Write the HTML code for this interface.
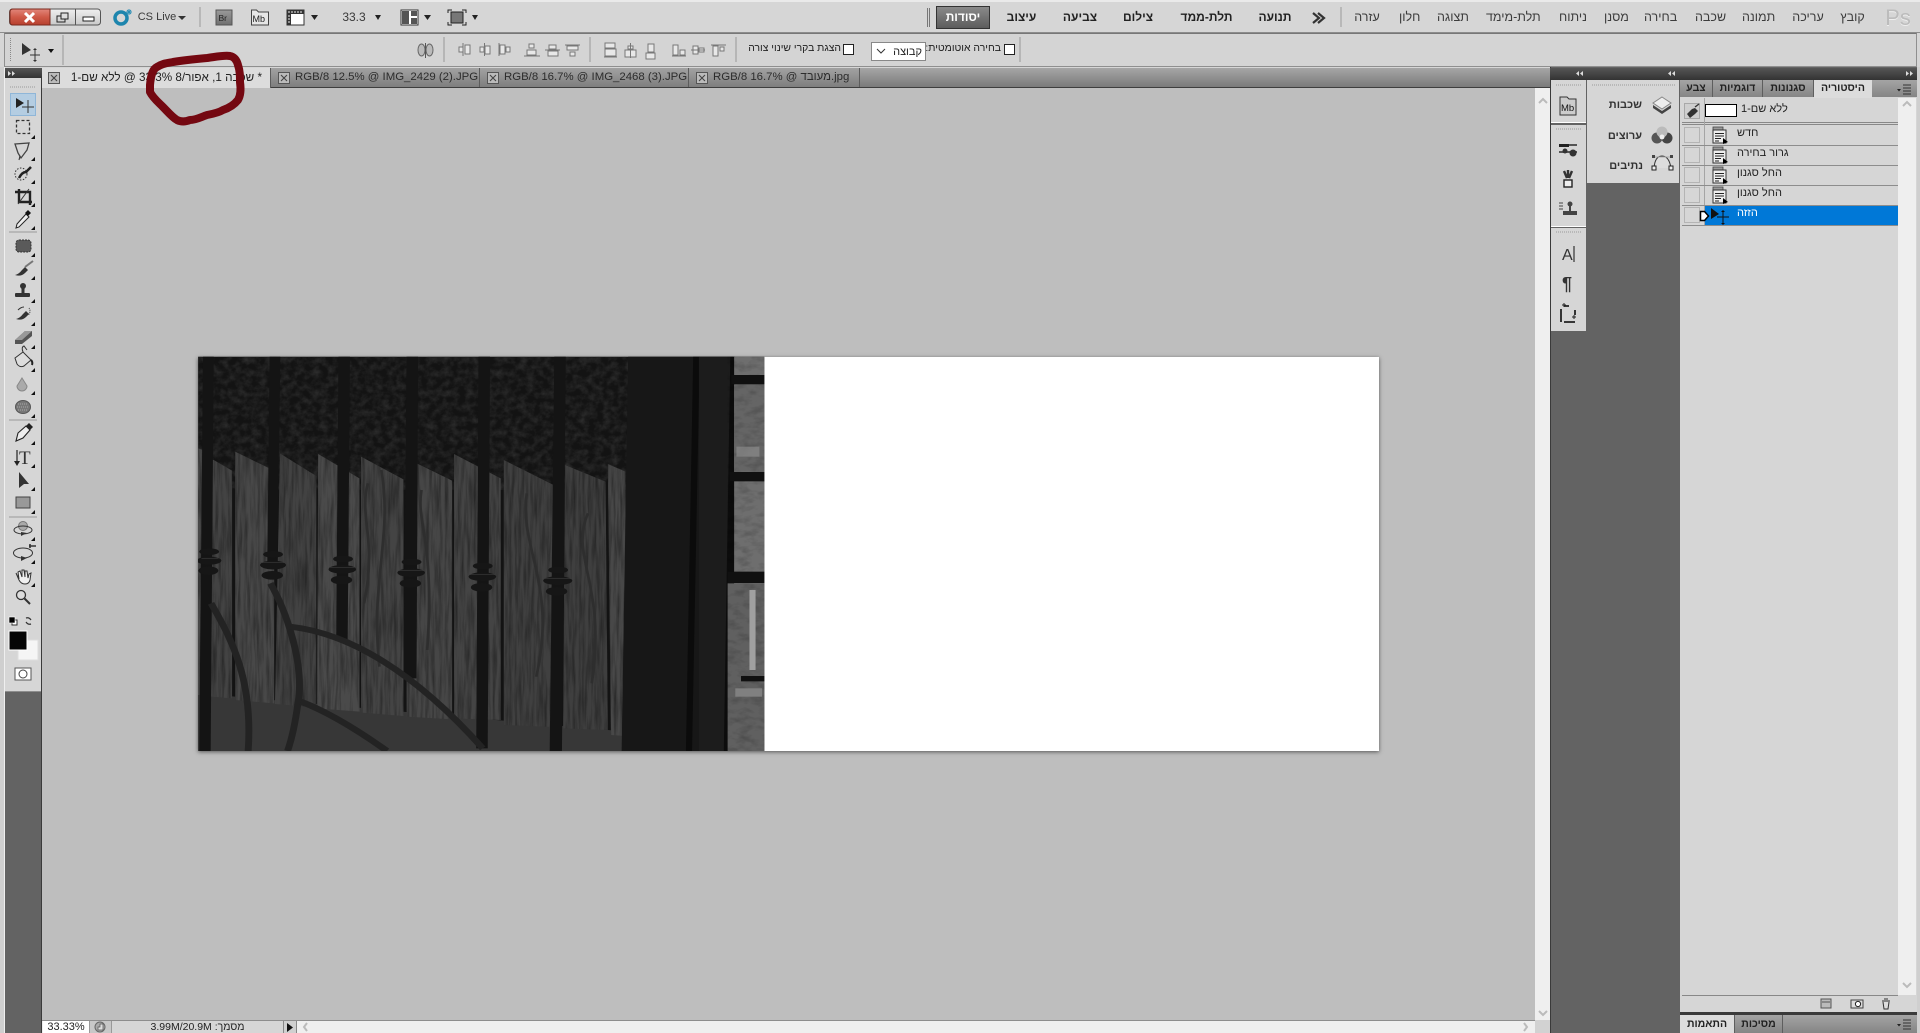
<!DOCTYPE html>
<html lang="he">
<head>
<meta charset="utf-8">
<title>Photoshop CS5</title>
<style>
html,body{margin:0;padding:0;width:1920px;height:1033px;overflow:hidden;background:#d6d6d6;}
body{position:relative;font-family:"Liberation Sans","Noto Sans CJK SC",sans-serif;font-size:12px;color:#333;}
.a{position:absolute;box-sizing:border-box;}
.t{position:absolute;white-space:nowrap;text-align:center;line-height:16px;height:16px;}
.m{font-size:12.5px;color:#3c3c3c;top:9px;}
.w{font-size:12px;font-weight:bold;color:#222;top:9px;}
.tab{position:absolute;top:68px;height:19px;box-sizing:border-box;background:linear-gradient(#a2a2a2,#7e7e7e);border-right:1px solid #5c5c5c;color:#2c2c2c;line-height:19px;font-size:11.4px;white-space:nowrap;}
.ptab{position:absolute;box-sizing:border-box;background:linear-gradient(#a4a4a4,#858585);border-right:1px solid #5e5e5e;text-align:center;font-size:10.5px;color:#222;font-weight:bold;white-space:nowrap;}
.row{position:absolute;left:1682px;width:216px;height:20px;border-bottom:1px solid #8d8d8d;box-sizing:border-box;}
.hb{position:absolute;left:1684px;width:16px;height:16px;border:1px solid #b4b4b4;box-sizing:border-box;}
.ht{position:absolute;left:1737px;font-size:11px;line-height:14px;white-space:nowrap;color:#222;}
.lb{position:absolute;left:1600px;width:42px;text-align:right;font-size:11px;font-weight:bold;color:#333;line-height:16px;white-space:nowrap;}
</style>
</head>
<body>
<!-- frames -->
<div class="a" style="left:0;top:0;width:1920px;height:2px;background:#eaeaea"></div>
<div class="a" style="left:0;top:32px;width:1920px;height:1px;background:#8c8c8c"></div>
<div class="a" style="left:4px;top:33px;width:1913px;height:34px;border:1px solid #8f8f8f;border-top:1px solid #777;background:#d4d4d4"></div>
<!-- doc area -->
<div class="a" style="left:42px;top:88px;width:1493px;height:932px;background:#bebebe"></div>
<!-- doc tab strip -->
<div class="a" style="left:42px;top:68px;width:1508px;height:19px;background:linear-gradient(#a6a6a6,#7a7a7a)"></div>
<div class="a" style="left:42px;top:87px;width:1508px;height:1px;background:#3e3e3e"></div>
<div class="tab" style="left:42px;width:229px;background:#dcdcdc;color:#222;height:20px;font-size:11.7px"><span dir="rtl" style="position:absolute;left:24px;width:196px;text-align:right;unicode-bidi:isolate">* שכבה 1, אפור/8 33.3% @ ללא שם-1</span></div>
<div class="tab" style="left:271px;width:209px"><span style="position:absolute;left:24px">RGB/8 12.5% @ IMG_2429 (2).JPG</span></div>
<div class="tab" style="left:480px;width:209px"><span style="position:absolute;left:24px">RGB/8 16.7% @ IMG_2468 (3).JPG</span></div>
<div class="tab" style="left:689px;width:171px"><span style="position:absolute;left:24px">RGB/8 16.7% @ מעובד.jpg</span></div>

<!-- left column -->
<div class="a" style="left:0;top:67px;width:5px;height:966px;background:#cfcfcf;border-right:1px solid #efefef"></div>
<div class="a" style="left:5px;top:68px;width:37px;height:965px;background:#636363;border-right:1px solid #3a3a3a"></div>
<div class="a" style="left:5px;top:68px;width:37px;height:10px;background:linear-gradient(#555,#333)"></div>
<div class="a" style="left:5px;top:78px;width:36px;height:614px;background:#d6d6d6;border-bottom:1px solid #8d8d8d"></div>
<div class="a" style="left:10px;top:93px;width:26px;height:23px;background:#b4cde2;border:1px solid #8fb6d8"></div>

<!-- canvas -->
<div class="a" style="left:198px;top:357px;width:1181px;height:394px;background:#fff;box-shadow:0 1px 4px rgba(0,0,0,.55)"></div>
<svg class="a" style="left:190px;top:350px" width="600" height="410" viewBox="0 0 1568 1230" preserveAspectRatio="none">
<defs>
<filter id="tr" x="0" y="0" width="100%" height="100%" color-interpolation-filters="sRGB"><feTurbulence type="fractalNoise" baseFrequency=".05" numOctaves="4" seed="2"/><feColorMatrix values="0 0 0 0 .22  0 0 0 0 .22  0 0 0 0 .22  1.2 0 0 0 -.42"/></filter>
<filter id="wood" x="0" y="0" width="100%" height="100%" color-interpolation-filters="sRGB"><feTurbulence type="fractalNoise" baseFrequency=".12 .008" numOctaves="3" seed="9"/><feColorMatrix values="0 0 0 0 0  0 0 0 0 0  0 0 0 0 0  .8 0 0 0 -.3"/><feComposite in2="SourceAlpha" operator="in" result="k"/><feMerge><feMergeNode in="SourceGraphic"/><feMergeNode in="k"/></feMerge></filter>
<filter id="sn" x="0" y="0" width="100%" height="100%" color-interpolation-filters="sRGB"><feTurbulence type="fractalNoise" baseFrequency=".03 .05" numOctaves="3" seed="5"/><feColorMatrix values="0 0 0 0 0  0 0 0 0 0  0 0 0 0 0  1 0 0 0 -.42"/></filter>
<clipPath id="ph"><rect x="21" y="20" width="1480" height="1183"/></clipPath>
</defs>
<g clip-path="url(#ph)">
<rect x="21" y="20" width="1480" height="1183" fill="#131313"/>
<rect x="21" y="20" width="1130" height="400" filter="url(#tr)"/>
<!-- ground -->
<polygon points="21,1030 1140,1145 1140,1203 21,1203" fill="#373737"/>
<!-- planks -->
<g filter="url(#wood)">
<polygon points="21,295 35,300 35,1035 21,1035" fill="#4a4a4a"/>
<polygon points="35,312 110,362 110,1045 35,1038" fill="#434343"/>
<polygon points="118,305 220,362 220,1060 118,1050" fill="#484848"/>
<polygon points="235,310 330,378 330,1072 222,1062" fill="#424242"/>
<polygon points="335,312 443,385 443,1085 332,1075" fill="#4a4a4a"/>
<polygon points="447,320 558,388 558,1098 447,1088" fill="#444444"/>
<polygon points="566,325 685,392 685,1108 566,1100" fill="#464646"/>
<polygon points="690,312 812,385 812,1110 690,1105" fill="#444444"/>
<polygon points="820,330 945,402 972,415 972,1132 820,1125" fill="#404040"/>
<polygon points="980,345 1086,395 1092,1140 975,1135" fill="#3f3f3f"/>
<polygon points="1092,342 1138,365 1138,1158 1100,1155" fill="#484848"/>
</g>
<path d="M465 400C440 500 490 560 455 760 M500 360C530 560 470 700 495 950 M605 420C590 520 640 560 620 900 M880 430C860 600 960 700 905 980 M1040 490C990 620 1090 700 1050 1000" stroke="#2e2e2e" stroke-width="7" fill="none"/>
<!-- post -->
<polygon points="1145,20 1420,20 1420,1203 1128,1203" fill="#171717"/>
<polygon points="1315,20 1332,20 1312,1203 1296,1203" fill="#0b0b0b"/>
<rect x="1330" y="20" width="82" height="1183" fill="#1c1c1c"/>
<polygon points="1412,20 1424,20 1420,1203 1395,1203" fill="#0c0c0c"/>
<!-- stone -->
<rect x="1422" y="20" width="80" height="1183" fill="#6e6e6e"/>
<rect x="1405" y="700" width="97" height="503" fill="#606060"/>
<rect x="1422" y="105" width="80" height="260" fill="#656565"/>
<rect x="1405" y="20" width="97" height="1183" filter="url(#sn)" opacity=".4"/>
<g fill="#101010"><rect x="1415" y="75" width="87" height="28"/><rect x="1410" y="366" width="92" height="28"/><rect x="1405" y="665" width="97" height="34"/><rect x="1440" y="978" width="62" height="16"/></g>
<rect x="1462" y="720" width="16" height="240" fill="#a0a0a0"/>
<rect x="1428" y="290" width="60" height="30" fill="#8a8a8a" opacity=".7"/>
<rect x="1425" y="1015" width="70" height="25" fill="#808080"/>
<!-- bars -->
<g fill="#141414">
<polygon points="34,20 62,20 54,1203 24,1203"/>
<polygon points="208,20 236,20 228,640 202,640"/>
<polygon points="388,20 418,20 412,870 382,870"/>
<polygon points="566,20 596,20 592,985 558,985"/>
<polygon points="754,20 784,20 778,1195 748,1195"/>
<polygon points="952,20 982,20 972,1203 940,1203"/>
</g>
<!-- curves -->
<g fill="none" stroke="#232323" stroke-width="18">
<path d="M55 760C110 870 165 990 152 1203"/>
<path d="M210 700C255 790 300 950 282 1060C275 1120 265 1170 255 1203"/>
<path d="M262 830C420 850 590 970 765 1195"/>
<path d="M290 1055C370 1090 450 1150 515 1203"/>
</g>
<!-- finials -->
<g fill="#161616">
<g><ellipse cx="50" cy="605" rx="26" ry="10"/><ellipse cx="50" cy="632" rx="32" ry="12"/><ellipse cx="48" cy="662" rx="26" ry="13"/></g>
<g><ellipse cx="217" cy="613" rx="26" ry="10"/><ellipse cx="217" cy="645" rx="34" ry="13"/><ellipse cx="215" cy="676" rx="28" ry="13"/></g>
<g><ellipse cx="400" cy="627" rx="26" ry="10"/><ellipse cx="398" cy="658" rx="36" ry="13"/><ellipse cx="396" cy="690" rx="28" ry="13"/></g>
<g><ellipse cx="579" cy="636" rx="26" ry="10"/><ellipse cx="578" cy="668" rx="36" ry="13"/><ellipse cx="576" cy="700" rx="28" ry="13"/></g>
<g><ellipse cx="765" cy="648" rx="26" ry="10"/><ellipse cx="764" cy="680" rx="36" ry="13"/><ellipse cx="762" cy="712" rx="28" ry="13"/></g>
<g><ellipse cx="962" cy="660" rx="26" ry="10"/><ellipse cx="961" cy="692" rx="38" ry="13"/><ellipse cx="958" cy="724" rx="28" ry="13"/></g>
</g>
<g stroke="#3a3a3a" stroke-width="2" fill="none"><path d="M30 625H74M185 638H250M365 652H432M545 662H614M730 674H800M928 686H998"/></g>
</g>
</svg>

<!-- doc scrollbars -->
<div class="a" style="left:1535px;top:88px;width:15px;height:932px;background:#efefef"></div>
<div class="a" style="left:42px;top:1020px;width:1508px;height:13px;background:#efefef;border-top:1px solid #8d8d8d"></div>
<div class="a" style="left:1535px;top:1020px;width:15px;height:13px;background:#d2d2d2"></div>
<div class="a" style="left:43px;top:1021px;width:46px;height:12px;background:#fff;text-align:center;font-size:11px;line-height:12px;color:#222">33.33%</div>
<div class="a" style="left:89px;top:1021px;width:23px;height:12px;background:#c8c8c8;border-left:1px solid #999;border-right:1px solid #999"></div>
<div class="a" style="left:112px;top:1021px;width:171px;height:12px;background:#d6d6d6;text-align:center;font-size:10.5px;line-height:12px;color:#222" dir="rtl">מסמך: 3.99M/20.9M</div>
<div class="a" style="left:283px;top:1021px;width:14px;height:12px;background:#d0d0d0;border-left:1px solid #888;border-right:1px solid #888"></div>

<!-- right dock -->
<div class="a" style="left:1550px;top:67px;width:370px;height:966px;background:#636363;border-left:1px solid #3a3a3a"></div>
<div class="a" style="left:1550px;top:68px;width:370px;height:12px;background:linear-gradient(#555,#333)"></div>
<div class="a" style="left:1551px;top:80px;width:35px;height:43px;background:#d6d6d6;border-bottom:1px solid #fff"></div>
<div class="a" style="left:1551px;top:125px;width:35px;height:102px;background:#d6d6d6;border-bottom:1px solid #fff"></div>
<div class="a" style="left:1551px;top:228px;width:35px;height:103px;background:#d6d6d6"></div>
<div class="a" style="left:1587px;top:80px;width:92px;height:103px;background:#d6d6d6"></div>
<div class="lb" style="top:97px">שכבות</div>
<div class="lb" style="top:128px">ערוצים</div>
<div class="lb" style="top:158px;left:1601px">נתיבים</div>

<!-- history panel -->
<div class="a" style="left:1680px;top:80px;width:237px;height:935px;background:#d6d6d6"></div>
<div class="a" style="left:1917px;top:67px;width:3px;height:966px;background:#cfcfcf"></div>
<div class="a" style="left:1680px;top:80px;width:237px;height:17px;background:linear-gradient(#a4a4a4,#858585)"></div>
<div class="ptab" style="left:1680px;top:80px;width:33px;height:17px;line-height:17px">צבע</div>
<div class="ptab" style="left:1713px;top:80px;width:50px;height:17px;line-height:17px">דוגמיות</div>
<div class="ptab" style="left:1763px;top:80px;width:51px;height:17px;line-height:17px">סגנונות</div>
<div class="ptab" style="left:1814px;top:80px;width:58px;height:18px;line-height:17px;background:#dcdcdc;color:#222;border:0">היסטוריה</div>
<div class="a" style="left:1898px;top:98px;width:18px;height:897px;background:#efefef"></div>
<div class="a" style="left:1682px;top:122px;width:216px;height:3px;background:#d6d6d6;border-top:1px solid #888;border-bottom:1px solid #888"></div>
<div class="a" style="left:1704px;top:98px;width:1px;height:128px;background:#a5a5a5"></div>
<div class="a" style="left:1684px;top:103px;width:16px;height:16px;border:1px solid #a8a8a8;background:#cfcfcf"></div>
<div class="a" style="left:1705px;top:104px;width:32px;height:13px;background:#fff;border:1px solid #000"></div>
<div class="ht" style="left:1741px;top:102px">ללא שם-1</div>
<div class="row" style="top:126px"></div><div class="row" style="top:146px"></div><div class="row" style="top:166px"></div><div class="row" style="top:186px"></div><div class="row" style="top:206px"></div>
<div class="a" style="left:1705px;top:206px;width:193px;height:19px;background:#0078d7"></div>
<div class="hb" style="top:127px"></div><div class="hb" style="top:147px"></div><div class="hb" style="top:167px"></div><div class="hb" style="top:187px"></div><div class="hb" style="top:207px"></div>
<div class="ht" style="top:126px">חדש</div>
<div class="ht" style="top:146px">גרור בחירה</div>
<div class="ht" style="top:166px">החל סגנון</div>
<div class="ht" style="top:186px">החל סגנון</div>
<div class="ht" style="top:206px;color:#fff">הזזה</div>
<div class="a" style="left:1682px;top:995px;width:216px;height:1px;background:#888"></div>
<div class="a" style="left:1680px;top:1012px;width:237px;height:3px;background:#3a3a3a"></div>
<div class="a" style="left:1680px;top:1015px;width:237px;height:18px;background:linear-gradient(#a4a4a4,#858585)"></div>
<div class="ptab" style="left:1680px;top:1015px;width:54px;height:18px;line-height:18px;background:#dcdcdc;border:0">התאמות</div>
<div class="ptab" style="left:1734px;top:1015px;width:49px;height:18px;line-height:18px;border-left:1px solid #5e5e5e">מסיכות</div>

<!-- top bar text -->
<div class="t" style="left:137px;width:40px;top:9px;font-size:11px;color:#3a3a3a">CS Live</div>
<div class="t" style="left:342px;width:24px;top:9px;font-size:12px;color:#3a3a3a">33.3</div>
<div class="a" style="left:936px;top:6px;width:54px;height:23px;background:linear-gradient(#8a8a8a,#5c5c5c);border:1px solid #333"></div>
<div class="t w" style="left:936px;width:54px;color:#fff;top:9px">יסודות</div>
<div class="t w" style="left:1006px;width:31px">עיצוב</div>
<div class="t w" style="left:1062px;width:36px">צביעה</div>
<div class="t w" style="left:1123px;width:30px">צילום</div>
<div class="t w" style="left:1180px;width:53px">תלת-ממד</div>
<div class="t w" style="left:1258px;width:34px">תנועה</div>
<div class="t m" style="left:1354px;width:26px">עזרה</div>
<div class="t m" style="left:1399px;width:20px">חלון</div>
<div class="t m" style="left:1437px;width:31px">תצוגה</div>
<div class="t m" style="left:1486px;width:54px">תלת-מימד</div>
<div class="t m" style="left:1559px;width:26px">ניתוח</div>
<div class="t m" style="left:1604px;width:23px">מסנן</div>
<div class="t m" style="left:1644px;width:33px">בחירה</div>
<div class="t m" style="left:1695px;width:30px">שכבה</div>
<div class="t m" style="left:1742px;width:32px">תמונה</div>
<div class="t m" style="left:1792px;width:32px">עריכה</div>
<div class="t m" style="left:1840px;width:25px">קובץ</div>
<div class="t" style="left:1884px;width:28px;top:6px;height:24px;line-height:24px;font-size:22px;color:#bcbcbc;text-shadow:0 1px 0 #eee">Ps</div>

<!-- options -->
<div class="t" style="left:748px;width:93px;top:41px;font-size:10.4px;color:#222;text-align:right" dir="rtl">הצגת בקרי שינוי צורה</div>
<div class="a" style="left:843px;top:44px;width:11px;height:11px;background:#fff;border:1px solid #222"></div>
<div class="a" style="left:871px;top:42px;width:55px;height:19px;background:#fff;border:1px solid #888;font-size:11px;line-height:18px;text-align:right;padding-right:3px;color:#222">קבוצה</div>
<div class="t" style="left:930px;width:71px;top:41px;font-size:10.4px;color:#222;text-align:right" dir="rtl">בחירה אוטומטית:</div>
<div class="a" style="left:1004px;top:44px;width:11px;height:11px;background:#fff;border:1px solid #222"></div>

<!-- all icons -->
<svg class="a" style="left:0;top:0" width="1920" height="1033" viewBox="0 0 1920 1033">
<defs>
<linearGradient id="red" x1="0" x2="0" y1="0" y2="1"><stop offset="0" stop-color="#e2877b"/><stop offset=".5" stop-color="#cf5a48"/><stop offset="1" stop-color="#b6402e"/></linearGradient>
<linearGradient id="btn" x1="0" x2="0" y1="0" y2="1"><stop offset="0" stop-color="#efefef"/><stop offset="1" stop-color="#c9c9c9"/></linearGradient>
<linearGradient id="br" x1="0" x2="0" y1="0" y2="1"><stop offset="0" stop-color="#9a9a9a"/><stop offset="1" stop-color="#6f6f6f"/></linearGradient>
<g id="tri"><polygon points="0,4 4,4 4,0" fill="#111"/></g>
<g id="doc"><rect x="1" y="0" width="10" height="4" fill="#999" stroke="#444" stroke-width=".8"/><rect x="1" y="3" width="13" height="13" fill="#eee" stroke="#333"/><path d="M3 6.5h9M3 9h9M3 11.5h6M3 14h4" stroke="#222" stroke-width="1"/><polygon points="11,11 16,15 11,17" fill="#000"/></g>
<g id="x"><rect x=".5" y=".5" width="11" height="11" fill="#bbb" stroke="#555"/><path d="M3 3l6 6M9 3l-6 6" stroke="#444" stroke-width="1.1"/></g>
</defs>

<!-- window buttons -->
<rect x="9.5" y="9" width="91" height="16" rx="3" fill="url(#btn)" stroke="#555"/>
<path d="M10 12q0-3 3-3h37v16H13q-3 0-3-3z" fill="url(#red)" stroke="#7c2a1e"/>
<path d="M25 13l9 9M34 13l-9 9" stroke="#fff" stroke-width="3"/>
<line x1="75.5" y1="9" x2="75.5" y2="25" stroke="#555"/>
<rect x="57" y="16" width="8" height="6" fill="none" stroke="#222"/><rect x="61" y="13" width="7" height="6" fill="#ddd" stroke="#222"/>
<rect x="83" y="17" width="11" height="4" fill="#fff" stroke="#222"/>
<!-- CS Live icon -->
<circle cx="121" cy="18" r="6" fill="none" stroke="#1d85ad" stroke-width="3.5"/>
<path d="M129 9v6M126 12h6M127 10l4 4M131 10l-4 4" stroke="#2a8eb5" stroke-width="1"/>
<polygon points="178,16 186,16 182,20" fill="#333"/>
<line x1="200" y1="7" x2="200" y2="27" stroke="#999"/>
<rect x="216" y="10" width="16" height="15" fill="url(#br)" stroke="#555"/><text x="218.5" y="21" font-size="8.5" font-family="Liberation Sans,sans-serif" fill="#222">Br</text>
<path d="M251.5 10h5l2 2h10v13h-17z" fill="#e6e6e6" stroke="#444"/><text x="252.5" y="22" font-size="9" font-family="Liberation Sans,sans-serif" fill="#222">Mb</text>
<rect x="287" y="10" width="17" height="15" fill="#fff" stroke="#333"/><path d="M287 10h17v4h-17zM287 14h4v11h-4z" fill="#333"/><path d="M289 11v2M292 11v2M295 11v2M298 11v2M301 11v2M288 16h2M288 19h2M288 22h2" stroke="#eee"/>
<polygon points="311,15 318,15 314.5,20" fill="#222"/>
<polygon points="375,15 381,15 378,20" fill="#222"/>
<rect x="401" y="10" width="17" height="15" fill="#fff" stroke="#333"/><path d="M402 11h7v13h-7zM411 11h6v5h-6zM411 18h6v6h-6z" fill="#555"/>
<polygon points="424,15 431,15 427.5,20" fill="#222"/>
<path d="M448 13v-3h4M462 10h4v3M466 22v3h-4M452 25h-4v-3" fill="none" stroke="#222"/><rect x="451" y="12" width="12" height="11" fill="#777" stroke="#222"/>
<polygon points="472,15 478,15 475,20" fill="#222"/>
<!-- workspace -->
<path d="M927.5 8v19M929.5 8v19" stroke="#777"/>
<path d="M1313 13l6 5-6 5M1318 13l6 5-6 5" fill="none" stroke="#333" stroke-width="2.2"/>
<line x1="1341" y1="7" x2="1341" y2="27" stroke="#999"/>

<!-- options bar icons -->
<path d="M10.5 38v24" stroke="#888" stroke-width="1" stroke-dasharray="1 1"/>
<polygon points="22,43 22,55 31,50" fill="#333"/>
<path d="M35 50v10M30 55h10" stroke="#333"/><polygon points="35,48 33,50 37,50" fill="#333"/><polygon points="35,62 33,60 37,60" fill="#333"/>
<polygon points="48,49 54,49 51,53" fill="#111"/>
<line x1="63" y1="35" x2="63" y2="65" stroke="#999"/>
<g fill="#bbb" stroke="#666"><ellipse cx="421.5" cy="50" rx="3.5" ry="6"/><ellipse cx="429.5" cy="50" rx="3.5" ry="6"/></g><line x1="425.5" y1="43" x2="425.5" y2="58" stroke="#555"/>
<line x1="444" y1="37" x2="444" y2="62" stroke="#999"/><line x1="590" y1="37" x2="590" y2="62" stroke="#999"/><line x1="736" y1="37" x2="736" y2="62" stroke="#999"/><line x1="1020" y1="37" x2="1020" y2="62" stroke="#999"/>
<g fill="#e8e8e8" stroke="#777">
<path d="M463 43v13M459 47h4v5h-4zM465 45h5v9h-5z"/>
<path d="M484.5 43v13M480 47h4v5h-4zM485 46h5v8h-5z"/>
<path d="M499 43v13M500 45h5v9h-5zM506 47h4v5h-4z"/>
<path d="M524 56h16M529 44h5v4h-5zM527 50h9v5h-9z"/>
<path d="M545 50h15M549 45h7v4h-7zM548 51h10v5h-10z"/>
<path d="M565 45h15M567 46h11v4h-11zM570 52h5v4h-5z"/>
<path d="M605 43h10v5h-10zM605 49h11v7h-11zM604 57h13"/>
<path d="M630.5 43v15M628 46h5v3h-5zM625 50h11v7h-11z"/>
<path d="M648 44h6v8h-6zM646 53h9v6h-9z"/>
<path d="M672 56h14M673 45h5v10h-5zM680 50h5v5h-5z"/>
<path d="M691 50h14M693 46h5v8h-5zM699 48h5v4h-5z"/>
<path d="M711 45h15M713 46h5v10h-5zM720 47h4v4h-4z"/>
</g>
<path d="M877 49l4 4 4-4" fill="none" stroke="#333"/>

<!-- tab close -->
<use href="#x" x="48" y="72"/><use href="#x" x="278" y="72"/><use href="#x" x="487" y="72"/><use href="#x" x="696" y="72"/>

<!-- dock chevrons -->
<g fill="#ddd">
<path d="M8 71l3 2.5-3 2.5zM12 71l3 2.5-3 2.5z"/>
<path d="M1579 71l-3 2.5 3 2.5zM1583 71l-3 2.5 3 2.5z"/>
<path d="M1671 71l-3 2.5 3 2.5zM1675 71l-3 2.5 3 2.5z"/>
<path d="M1906 71l3 2.5-3 2.5zM1910 71l3 2.5-3 2.5z"/>
</g>
<!-- grips -->
<g stroke="#999" stroke-dasharray="1 1"><path d="M10 87h26M1556 85h26M1556 129h26M1556 232h26M1592 85h83"/></g>
<!-- doc scroll arrows -->
<path d="M1539 103l4-4 4 4M1539 1011l4 4 4-4" fill="none" stroke="#bbb" stroke-width="2"/>
<path d="M307 1023l-3 4 3 4M1524 1023l3 4-3 4" fill="none" stroke="#bbb" stroke-width="2"/>
<polygon points="287,1023 287,1032 293,1027.5" fill="#111"/>
<circle cx="100" cy="1027" r="5" fill="#aaa" stroke="#666"/><path d="M100 1024h3v6h-5v-3h2z" fill="#ddd" stroke="#555" stroke-width=".7"/>

<!-- tools -->
<polygon points="16,98 16,108 24,103" fill="#222"/><path d="M28 100v13M22 107h12" stroke="#333"/>
<rect x="16.5" y="120.5" width="13" height="13" fill="none" stroke="#333" stroke-dasharray="3 2" stroke-width="1.3"/>
<path d="M15 144l14-1-2 7-6 8-3-5z" fill="none" stroke="#444" stroke-width="1.3"/><path d="M20 156l-1 4" stroke="#333"/>
<circle cx="21" cy="174" r="6" fill="none" stroke="#333" stroke-dasharray="1.5 1.5"/><path d="M19 178q3-6 7-6l5-5" stroke="#222" stroke-width="2.5" fill="none"/>
<path d="M19 189v13h13M15 192h15v13" fill="none" stroke="#222" stroke-width="2.4"/><line x1="18" y1="204" x2="29" y2="189" stroke="#333"/>
<path d="M17 224l9-10 3 3-10 10-3 1z" fill="#eee" stroke="#222"/><path d="M25 213l3-3 3 3-3 3z" fill="#111"/>
<line x1="9" y1="232" x2="37" y2="232" stroke="#999"/>
<rect x="16" y="240" width="15" height="12" rx="3" fill="#5a5a5a" stroke="#333" stroke-dasharray="2 1"/>
<path d="M15 275q4-1 7-5l3-3 3 3-3 3q-4 4-10 2z" fill="#333"/><path d="M25 267l8-6" stroke="#777" stroke-width="2"/>
<circle cx="23" cy="286" r="3" fill="#333"/><rect x="21.5" y="288" width="3" height="5" fill="#333"/><rect x="15" y="293" width="15" height="4" rx="1" fill="#333"/>
<path d="M16 319q4-1 7-5l3-3 3 3-3 3q-4 4-10 2z" fill="#333"/><path d="M18 310q3-3 6-3" fill="none" stroke="#333"/><path d="M29 308a5 5 0 0 1-1 7" fill="none" stroke="#333" stroke-dasharray="1 1"/>
<polygon points="15,340 25,331 32,331 32,336 22,344 15,344" fill="#555"/><polygon points="25,331 32,331 22,340 15,340" fill="#999"/>
<path d="M15 358l8-6 8 8-7 6q-4 2-7-2z" fill="#ddd" stroke="#333"/><path d="M23 352q-2-5 1-6l3 4" fill="none" stroke="#333"/><path d="M31 360q2 2 1 5" fill="none" stroke="#222" stroke-width="2"/>
<path d="M22 378l5 8a5 5 0 1 1-10 0z" fill="#aaa" stroke="#888"/>
<ellipse cx="23" cy="407" rx="7.5" ry="6.5" fill="#777" stroke="#555"/><path d="M18 404h10M17 407h12M18 410h10" stroke="#aaa" stroke-dasharray="1 1"/>
<line x1="9" y1="420" x2="37" y2="420" stroke="#999"/>
<path d="M16 441l2-8 8-7 4 4-7 8z" fill="#eee" stroke="#222" stroke-width="1.1"/><path d="M26 426l3-3 4 4-3 3z" fill="#222"/>
<text x="19" y="464" font-family="Liberation Serif,serif" font-size="19" fill="#333">T</text><path d="M17 450v14" stroke="#222" stroke-width="1.2"/><polygon points="14,461 20,461 17,466" fill="#222"/>
<polygon points="19,472 19,488 24,484 29,484" fill="#333"/>
<rect x="16" y="497" width="14" height="11" fill="#999" stroke="#444"/>
<line x1="9" y1="517" x2="37" y2="517" stroke="#999"/>
<circle cx="23" cy="526" r="4.5" fill="#aaa" stroke="#777"/><ellipse cx="23" cy="530" rx="9" ry="4" fill="none" stroke="#333"/><polygon points="21,532 27,533 21,536" fill="#333"/>
<path d="M29 546h7M30 544v4" stroke="#333" stroke-width="1.6"/><ellipse cx="23" cy="553" rx="9.5" ry="5" fill="none" stroke="#333"/><polygon points="21,556 27,558 21,561" fill="#333"/>
<path d="M16 573l3 7q2 4 6 4 4 0 5-4l1-7-2 1-1 4-1-7-2 0 0 6-1-7-2 0 0 7-2-6-2 1 1 7z" fill="#f0f0f0" stroke="#333"/>
<circle cx="21" cy="595" r="4.5" fill="#ddd" stroke="#333" stroke-width="1.3"/><line x1="24.5" y1="598.5" x2="30" y2="604" stroke="#333" stroke-width="2"/>
<rect x="12" y="620" width="5" height="5" fill="#fff" stroke="#333"/><rect x="9" y="617" width="6" height="6" fill="#000" stroke="#fff" stroke-width=".6"/>
<path d="M26 618q3-1 5 2M31 624q-3 1-5-2" stroke="#333" fill="none" stroke-width="1.2"/>
<rect x="18" y="640" width="20" height="20" fill="#f5f5f5" stroke="#ddd"/>
<rect x="9" y="631" width="18" height="19" fill="#050505" stroke="#fff"/>
<rect x="15" y="668" width="16" height="12" fill="#fff" stroke="#555"/><circle cx="23" cy="674" r="4" fill="#fff" stroke="#444"/>
<g>
<use href="#tri" x="31" y="135"/><use href="#tri" x="31" y="157"/><use href="#tri" x="31" y="180"/><use href="#tri" x="31" y="203"/><use href="#tri" x="31" y="226"/><use href="#tri" x="31" y="253"/><use href="#tri" x="31" y="276"/><use href="#tri" x="31" y="299"/><use href="#tri" x="31" y="322"/><use href="#tri" x="31" y="345"/><use href="#tri" x="31" y="368"/><use href="#tri" x="31" y="391"/><use href="#tri" x="31" y="414"/><use href="#tri" x="31" y="441"/><use href="#tri" x="31" y="464"/><use href="#tri" x="31" y="487"/><use href="#tri" x="31" y="510"/><use href="#tri" x="31" y="537"/><use href="#tri" x="31" y="560"/><use href="#tri" x="31" y="583"/>
</g>

<!-- dock icons -->
<path d="M1560 97h7l2 2h7v16h-16z" fill="#ccc" stroke="#333"/><text x="1561" y="111" font-size="9.5" font-family="Liberation Sans,sans-serif" fill="#111">Mb</text>
<path d="M1559 145h18M1559 152h18" stroke="#555" stroke-width="2"/><rect x="1559" y="144" width="10" height="3" fill="#222"/><circle cx="1573" cy="153" r="3.5" fill="#333"/><circle cx="1565" cy="151" r="2.5" fill="#333"/>
<path d="M1564 171l3 7M1572 171l-3 7M1568 170v8" stroke="#333" stroke-width="2.4"/><rect x="1564" y="180" width="8" height="7" fill="#eee" stroke="#222" stroke-width="1.4"/>
<path d="M1559 203h4M1559 206h4M1559 209h4" stroke="#444"/><circle cx="1570" cy="204" r="2.5" fill="#444"/><rect x="1569" y="206" width="2" height="5" fill="#444"/><rect x="1563" y="211" width="14" height="4" fill="#444"/>
<text x="1562" y="260" font-size="16" font-family="Liberation Sans,sans-serif" fill="#333">A</text><line x1="1574" y1="246" x2="1574" y2="262" stroke="#111"/>
<text x="1562" y="290" font-size="18" font-weight="bold" font-family="Liberation Sans,sans-serif" fill="#333">¶</text>
<path d="M1561 309v13M1564 306h5M1564 322h11M1575 310v5" fill="none" stroke="#222" stroke-width="1.8"/><path d="M1562 305h4M1564 303v4M1572 317h4M1574 315v4" stroke="#222"/>
<polygon points="1662,97 1671,103 1662,109 1653,103" fill="#eee" stroke="#888"/><polygon points="1653,105 1662,111 1671,105 1671,108 1662,114 1653,108" fill="#444"/>
<circle cx="1657" cy="138" r="5.5" fill="#555"/><circle cx="1667" cy="138" r="5.5" fill="#444"/><circle cx="1662" cy="132" r="5.5" fill="#bbb"/><circle cx="1662" cy="137" r="2.5" fill="#eee"/>
<path d="M1654 168q1-12 8-12t9 12" fill="#ddd" stroke="#333"/><path d="M1652 157h20" stroke="#aaa"/><rect x="1652" y="166" width="4" height="4" fill="#eee" stroke="#222"/><rect x="1669" y="166" width="4" height="4" fill="#eee" stroke="#222"/><rect x="1652" y="155" width="3" height="3" fill="#444"/><rect x="1670" y="155" width="3" height="3" fill="#444"/>

<!-- history icons -->
<path d="M1687 114l5-5 3-1 3 3-3 3-5 4z" fill="#333"/><path d="M1695 107l4-3" stroke="#333" stroke-width="1.4"/>
<use href="#doc" x="1712" y="127"/><use href="#doc" x="1712" y="147"/><use href="#doc" x="1712" y="167"/><use href="#doc" x="1712" y="187"/>
<path d="M1700.5 211.5h4l4 4.5-4 4.5h-4z" fill="#fff" stroke="#000" stroke-width="1.5"/>
<polygon points="1711,208 1711,219 1719,214" fill="#111"/>
<path d="M1723 211v12M1717 217h12" stroke="#111"/><polygon points="1723,210 1721,212 1725,212" fill="#111"/><polygon points="1723,225 1721,223 1725,223" fill="#111"/>
<path d="M1903 106l4-4 4 4M1903 983l4 4 4-4" fill="none" stroke="#bbb" stroke-width="2"/>
<!-- panel menus -->
<g><polygon points="1897,89 1901,89 1899,91.5" fill="#222"/><path d="M1903 85h8M1903 88h8M1903 91h8M1903 94h8" stroke="#333"/></g>
<g><polygon points="1897,1024 1901,1024 1899,1026.5" fill="#222"/><path d="M1903 1020h8M1903 1023h8M1903 1026h8M1903 1029h8" stroke="#333"/></g>
<!-- footer icons -->
<rect x="1821" y="999" width="10" height="9" fill="#bbb" stroke="#555"/><path d="M1822 1002h8" stroke="#555"/>
<rect x="1851" y="1000" width="12" height="8" fill="#ddd" stroke="#444"/><circle cx="1858" cy="1004" r="2.6" fill="#fff" stroke="#222"/>
<path d="M1882 1001h8M1884 999h4M1883 1002l1 7h4l1-7" fill="#ddd" stroke="#333"/>

<!-- red hand-drawn circle -->
<path d="M150 85C151 74 153 69 157 67C163 63 168 63 173 62C185 60 196 59 207 58C215 57 224 55 230 56C235 57 237 61 238 65C240 71 240 76 240 82C241 89 241 95 238 100C234 105 229 108 223 110C218 113 212 114 207 115C201 117 196 120 190 120C185 122 181 122 177 120C172 117 168 112 163 107C158 102 153 98 150 92C150 89 150 87 150 85Z" fill="none" stroke="#740811" stroke-width="8" stroke-linejoin="round"/>
</svg>
</body>
</html>
